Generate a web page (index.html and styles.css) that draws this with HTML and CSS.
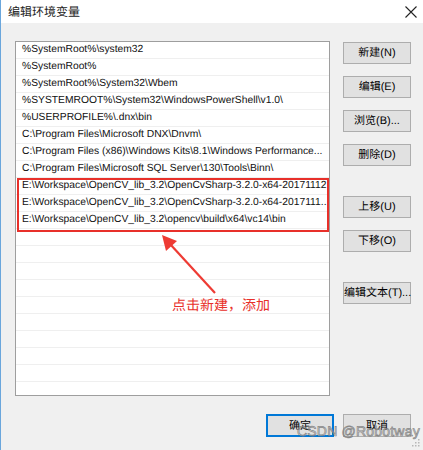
FILE: index.html
```html
<!DOCTYPE html>
<html lang="zh">
<head>
<meta charset="utf-8">
<link rel="stylesheet" href="styles.css">
</head>
<body>
<div class="window">
  <div class="titlebar">
    <span class="title">编辑环境变量</span>
    <svg class="close" width="12" height="12" viewBox="0 0 12 12"><path d="M0.5 0.5L11.5 11.5M11.5 0.5L0.5 11.5" stroke="#222" stroke-width="1.1" fill="none"/></svg>
  </div>
  <div class="content">
    <div class="main">
      <div class="list">
        <div class="row">%SystemRoot%\system32</div>
        <div class="row">%SystemRoot%</div>
        <div class="row">%SystemRoot%\System32\Wbem</div>
        <div class="row">%SYSTEMROOT%\System32\WindowsPowerShell\v1.0\</div>
        <div class="row">%USERPROFILE%\.dnx\bin</div>
        <div class="row">C:\Program Files\Microsoft DNX\Dnvm\</div>
        <div class="row">C:\Program Files (x86)\Windows Kits\8.1\Windows Performance...</div>
        <div class="row">C:\Program Files\Microsoft SQL Server\130\Tools\Binn\</div>
        <div class="row">E:\Workspace\OpenCV_lib_3.2\OpenCvSharp-3.2.0-x64-20171112</div>
        <div class="row">E:\Workspace\OpenCV_lib_3.2\OpenCvSharp-3.2.0-x64-2017111...</div>
        <div class="row">E:\Workspace\OpenCV_lib_3.2\opencv\build\x64\vc14\bin</div>
        <div class="row"></div><div class="row"></div><div class="row"></div>
        <div class="row"></div><div class="row"></div><div class="row"></div>
        <div class="row"></div><div class="row"></div><div class="row"></div>
        <div class="row"></div>
        <div class="highlight"></div>
      </div>
      <div class="side">
        <button class="btn">新建(N)</button>
        <button class="btn gap-s">编辑(E)</button>
        <button class="btn gap-s">浏览(B)...</button>
        <button class="btn gap-s">删除(D)</button>
        <button class="btn gap-l">上移(U)</button>
        <button class="btn gap-s">下移(O)</button>
        <button class="btn gap-l">编辑文本(T)...</button>
      </div>
    </div>
    <div class="footer">
      <button class="btn primary">确定</button>
      <button class="btn">取消</button>
    </div>
  </div>
  <svg class="arrow" width="423" height="450" viewBox="0 0 423 450">
    <line x1="215" y1="293" x2="170" y2="244" stroke="#ee3b34" stroke-width="2.2"/>
    <polygon points="162,235 166,251 177,241" fill="#ee3b34"/>
  </svg>
  <div class="note">点击新建，添加</div>
  <div class="watermark">CSDN @Robotway</div>
  <svg class="grip" width="8" height="8" viewBox="0 0 8 8">
    <rect x="6" y="0" width="1.5" height="1.5" fill="#b8b8b8"/>
    <rect x="3" y="3" width="1.5" height="1.5" fill="#b8b8b8"/>
    <rect x="6" y="3" width="1.5" height="1.5" fill="#b8b8b8"/>
    <rect x="0" y="6" width="1.5" height="1.5" fill="#b8b8b8"/>
    <rect x="3" y="6" width="1.5" height="1.5" fill="#b8b8b8"/>
    <rect x="6" y="6" width="1.5" height="1.5" fill="#b8b8b8"/>
  </svg>
</div>
</body>
</html>
```
FILE: styles.css
```css
* { box-sizing: border-box; }
html, body { margin: 0; padding: 0; }
body {
  font-family: "Liberation Sans", "Noto Sans CJK SC", sans-serif;
  font-size: 10.3px;
  color: #000;
  background: #f0f0f0;
  text-rendering: geometricPrecision;
}
.window {
  position: relative;
  width: 423px;
  height: 450px;
  background: #f0f0f0;
  border-left: 1px solid #6aa6dc;
  overflow: hidden;
}
.titlebar {
  height: 23px;
  background: #fff;
  display: flex;
  align-items: center;
  justify-content: space-between;
  padding: 0 6px 0 7px;
}
.title {
  font-family: "Noto Sans CJK SC", sans-serif;
  font-size: 12px;
  color: #222;
}
.close { margin-top: 1px; }
.content {
  padding: 18px 12px 0 14px;
}
.main {
  display: flex;
  gap: 13px;
}
.list {
  position: relative;
  width: 315px;
  height: 355px;
  background: #fff;
  border: 1px solid #9e9e9e;
  overflow: hidden;
}
.row {
  height: 17px;
  line-height: 16px;
  padding-left: 6px;
  border-bottom: 1px solid #efefef;
  white-space: nowrap;
  overflow: hidden;
  font-size: 10.3px;
  color: #111;
}
.highlight {
  position: absolute;
  left: 1px;
  top: 136px;
  width: 312px;
  height: 54px;
  border: 2px solid #e8302a;
}
.side {
  display: flex;
  flex-direction: column;
  padding-top: 1px;
}
.btn {
  width: 68px;
  height: 22px;
  background: #e1e1e1;
  border: 1px solid #adadad;
  font-family: "Liberation Sans", "Noto Sans CJK SC", sans-serif;
  font-size: 11px;
  color: #000;
  padding: 0;
  line-height: 20px;
  white-space: nowrap;
  text-rendering: geometricPrecision;
}
.gap-s { margin-top: 12px; }
.gap-l { margin-top: 30px; }
.footer {
  display: flex;
  justify-content: flex-end;
  gap: 9px;
  margin-top: 18px;
}
.footer .btn { height: 23px; }
.primary { border: 2px solid #0078d7; }
.arrow {
  position: absolute;
  left: -1px;
  top: 0;
  pointer-events: none;
}
.note {
  position: absolute;
  left: 171px;
  top: 295px;
  font-family: "Noto Sans CJK SC", sans-serif;
  font-size: 14px;
  color: #e8302a;
}
.watermark {
  position: absolute;
  left: 296px;
  top: 423px;
  white-space: nowrap;
  font-family: "Liberation Sans", sans-serif;
  font-size: 14px;
  letter-spacing: 0.2px;
  color: rgba(215, 215, 215, 0.55);
  -webkit-text-stroke: 0.7px rgba(110, 110, 110, 0.8);
}
.grip {
  position: absolute;
  right: 3px;
  bottom: 3px;
}
```
